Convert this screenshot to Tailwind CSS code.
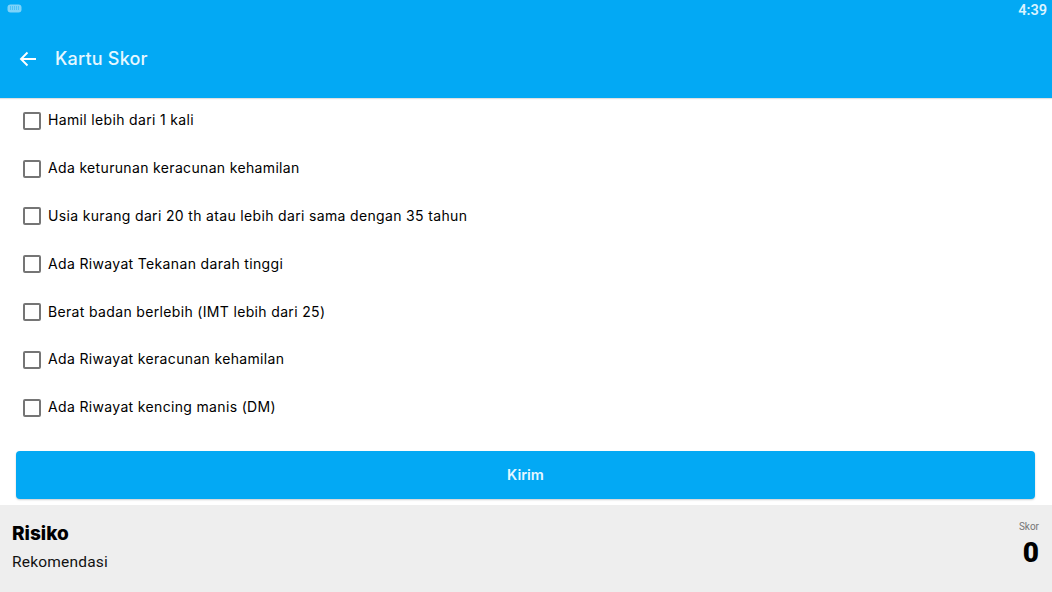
<!doctype html>
<html>
<head>
<meta charset="utf-8">
<script src="https://cdn.jsdelivr.net/npm/@tailwindcss/browser@4"></script>
</head>
<body class="m-0 bg-white">
<div class="w-[1052px] h-[592px] overflow-hidden flex flex-col bg-white font-['Inter',sans-serif] text-black">
  <header class="h-[98px] shrink-0 bg-[#03a9f4] text-white flex flex-col shadow-[0_1px_1px_rgba(0,0,0,0.12)] relative z-10">
    <div class="h-[24px] flex items-center justify-between pl-[7px] pr-[5px]">
      <svg width="15" height="9" viewBox="0 0 15 9" class="mb-[8px] opacity-70"><rect x="0.5" y="0.5" width="14" height="8" rx="3" fill="#b3e5fc"/><path d="M3 3h9M3 5h9" stroke="#03a9f4" stroke-width="0.8" stroke-dasharray="1 1"/></svg>
      <span class="text-[14.5px] font-semibold leading-none font-['Roboto',sans-serif] text-[#d9f3ff] pb-[1px]">4:39</span>
    </div>
    <div class="flex-1 flex items-center pl-[19px] mb-[4px]">
      <svg width="18" height="16" viewBox="0 0 18 16" fill="none" stroke="white" stroke-width="1.9" class="mr-[18px]"><path d="M17 8H2M8.5 1.5L2 8l6.500 6.500"/></svg>
      <span class="text-[18px] font-medium leading-none tracking-[0.2px] text-[#e6f7ff]">Kartu Skor</span>
    </div>
  </header>

  <main class="flex-1 flex flex-col">
    <ul class="flex flex-col -mt-px">
      <li class="h-[47.8px] flex items-center pl-[23px] gap-[7px] text-[14px] tracking-[0.34px]"><span class="w-[18px] h-[18px] rounded-[2px] border-2 border-[#757575]"></span><span class="pb-[2px]">Hamil lebih dari 1 kali</span></li>
      <li class="h-[47.8px] flex items-center pl-[23px] gap-[7px] text-[14px] tracking-[0.34px]"><span class="w-[18px] h-[18px] rounded-[2px] border-2 border-[#757575]"></span><span class="pb-[2px]">Ada keturunan keracunan kehamilan</span></li>
      <li class="h-[47.8px] flex items-center pl-[23px] gap-[7px] text-[14px] tracking-[0.34px]"><span class="w-[18px] h-[18px] rounded-[2px] border-2 border-[#757575]"></span><span class="pb-[2px]">Usia kurang dari 20 th atau lebih dari sama dengan 35 tahun</span></li>
      <li class="h-[47.8px] flex items-center pl-[23px] gap-[7px] text-[14px] tracking-[0.34px]"><span class="w-[18px] h-[18px] rounded-[2px] border-2 border-[#757575]"></span><span class="pb-[2px]">Ada Riwayat Tekanan darah tinggi</span></li>
      <li class="h-[47.8px] flex items-center pl-[23px] gap-[7px] text-[14px] tracking-[0.34px]"><span class="w-[18px] h-[18px] rounded-[2px] border-2 border-[#757575]"></span><span class="pb-[2px]">Berat badan berlebih (IMT lebih dari 25)</span></li>
      <li class="h-[47.8px] flex items-center pl-[23px] gap-[7px] text-[14px] tracking-[0.34px]"><span class="w-[18px] h-[18px] rounded-[2px] border-2 border-[#757575]"></span><span class="pb-[2px]">Ada Riwayat keracunan kehamilan</span></li>
      <li class="h-[47.8px] flex items-center pl-[23px] gap-[7px] text-[14px] tracking-[0.34px]"><span class="w-[18px] h-[18px] rounded-[2px] border-2 border-[#757575]"></span><span class="pb-[2px]">Ada Riwayat kencing manis (DM)</span></li>
    </ul>
    <div class="pl-[16px] pr-[17px] mt-[19.3px]">
      <button class="w-full h-[48px] rounded-[4px] bg-[#03a9f4] text-[#e6f7ff] text-[14.5px] font-semibold shadow-[0_1px_2px_rgba(0,0,0,0.2)]">Kirim</button>
    </div>
  </main>

  <footer class="h-[87px] shrink-0 bg-[#eeeeee] flex justify-between pl-[12px] pr-[13px]">
    <div class="flex flex-col pt-[17px]">
      <span class="text-[19px] font-extrabold leading-[24px]">Risiko</span>
      <span class="text-[15.5px] leading-[20px] mt-[6px] text-[#111] font-['Roboto',sans-serif] tracking-[0.2px]">Rekomendasi</span>
    </div>
    <div class="flex flex-col items-end pt-[16px]">
      <span class="text-[10px] leading-[12px] text-[#757575] font-['Roboto',sans-serif]">Skor</span>
      <span class="text-[28px] font-black leading-[30px] mt-[5px] font-['Roboto',sans-serif]">0</span>
    </div>
  </footer>
</div>
</body>
</html>
